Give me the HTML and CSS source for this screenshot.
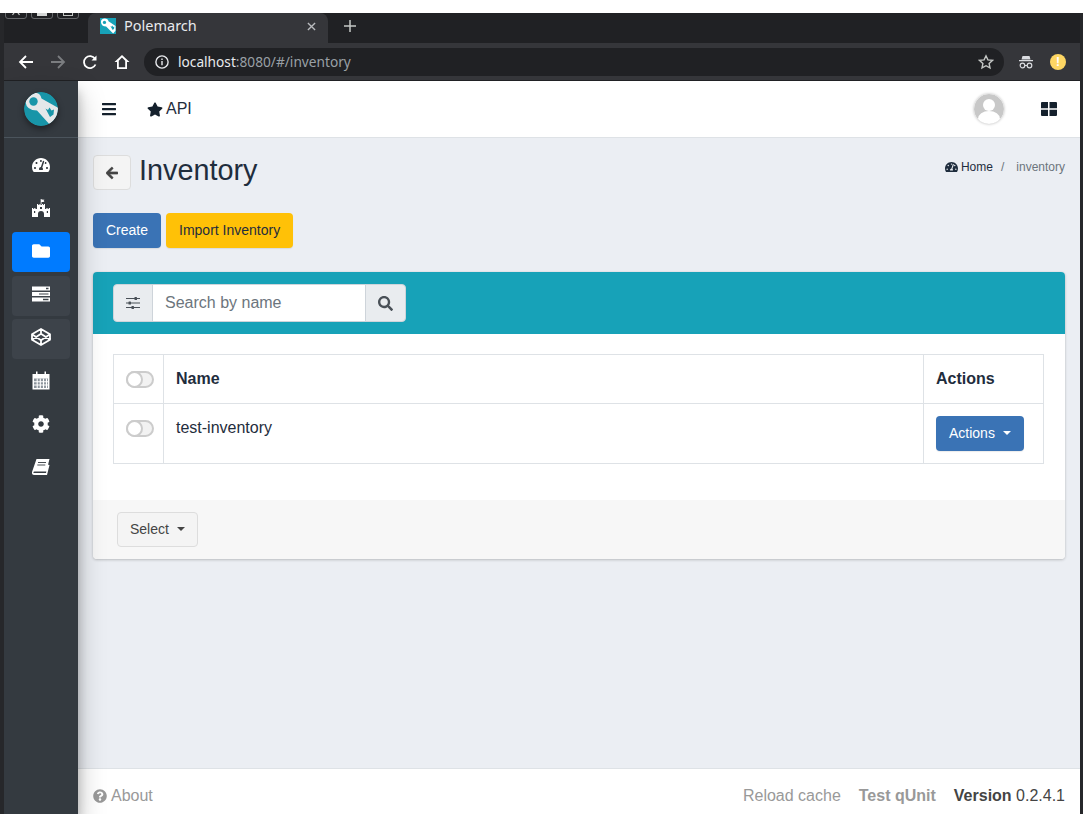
FILE: index.html
```html
<!DOCTYPE html>
<html lang="en">
<head>
    <meta charset="UTF-8">
    <meta name="viewport" content="width=device-width, initial-scale=1.0">
    <title>Polemarch</title>
    <link rel="stylesheet" href="styles.css">
</head>
<body>
    <div class="window">
        <div class="tab-strip">
            <span class="win-btn"><svg class="win-glyph" viewBox="0 0 10 6"><path d="M5 0L1.500 5M5 0l3.500 5" stroke="#c4c7c5" stroke-width="1.200" fill="none"/></svg></span>
            <span class="win-btn"><i class="win-min"></i></span>
            <span class="win-btn"><i class="win-box"></i></span>
            <div class="tab">
                <svg class="favicon" viewBox="0 0 34 34"><rect width="34" height="34" fill="#17a2b8"/><path d="M2 9Q2 1 10 1Q17 1 18 7L33 17V27L28 33L13 18Q3 18 2 9Z" fill="#fff"/><circle cx="9.500" cy="9.500" r="3.500" fill="#17a2b8"/><path d="M22 17l2.500 1.500 1.500-2.500 2 3 2.500-1-.5 5-3 2.500z" fill="#17a2b8"/></svg>
                <span class="tab-title">Polemarch</span>
                <svg class="tab-close" viewBox="0 0 10 10"><path d="M1 1l8 8M9 1l-8 8" stroke="#b9bbbe" stroke-width="1.500"/></svg>
            </div>
            <svg class="new-tab" viewBox="0 0 12 12"><path d="M6 0v12M0 6h12" stroke="#c4c7c5" stroke-width="1.500"/></svg>
        </div>
        <div class="toolbar">
            <svg class="tb-icon" viewBox="0 0 16 16"><path d="M15 8H2M8 2L2 8l6 6" fill="none" stroke="#fff" stroke-width="1.800"/></svg>
            <svg class="tb-icon" viewBox="0 0 16 16"><path d="M1 8h13M8 2l6 6-6 6" fill="none" stroke="#7b7d80" stroke-width="1.800"/></svg>
            <svg class="tb-icon" viewBox="0 0 16 16"><path d="M13.500 10.500A6 6 0 1 1 13 4.800" fill="none" stroke="#fff" stroke-width="1.800"/><path d="M14.500 1.500v5h-5z" fill="#fff"/></svg>
            <svg class="tb-icon" viewBox="0 0 16 16"><path d="M8 1L0.500 8H3v7h10V8h2.500zM4.800 13.300V6.800L8 3.600l3.200 3.200v6.500z" fill="#fff" fill-rule="evenodd"/></svg>
            <div class="omnibox">
                <svg class="info-icon" viewBox="0 0 14 14"><circle cx="7" cy="7" r="6.100" fill="none" stroke="#e8eaed" stroke-width="1.400"/><path d="M6.300 6h1.400v4.300H6.300zM6.300 3.500h1.400v1.400H6.300z" fill="#e8eaed"/></svg>
                <span class="url"><span class="url-host">localhost</span>:8080/#/inventory</span>
                <svg class="bookmark" viewBox="0 0 16 16"><path d="M8 1.800l1.900 4.100 4.500.5-3.300 3 .9 4.500L8 11.700l-4 2.200.9-4.500-3.300-3 4.500-.5z" fill="none" stroke="#c4c7c5" stroke-width="1.400"/></svg>
            </div>
            <svg class="incognito" viewBox="0 0 16 14"><path d="M4.500 1h7l1 3.500h-9zM1 5h14v1.200H1z" fill="#dadce0"/><circle cx="4.500" cy="10.500" r="2.300" fill="none" stroke="#dadce0" stroke-width="1.200"/><circle cx="11.500" cy="10.500" r="2.300" fill="none" stroke="#dadce0" stroke-width="1.200"/><path d="M6.800 10.500h2.400" stroke="#dadce0"/></svg>
            <span class="update-badge">!</span>
        </div>
        <div class="app">
            <aside class="sidebar">
                <div class="brand">
                    <svg class="brand-logo" viewBox="0 0 34 34"><clipPath id="logo-clip"><circle cx="17" cy="17" r="17"/></clipPath><circle cx="17" cy="17" r="17" fill="#1895a8"/><g clip-path="url(#logo-clip)"><path d="M1.500 10Q1.500 .5 10 .5Q16.500 .5 17.500 6.500L36 17V31L27 34L13 18.500Q2.500 18.500 1.500 10Z" fill="#e4e7e9"/><circle cx="9.500" cy="9.500" r="4.200" fill="#1895a8"/><path d="M21.500 16.500l2.500 1.500 1.500-2.500 2 3 2.500-1-.5 5-3.500 2.500z" fill="#1895a8"/></g></svg>
                </div>
                <nav class="side-nav">
                    <a class="side-item">
                        <svg class="side-icon" viewBox="0 0 576 512"><path d="M288 32C128.940 32 0 160.940 0 320c0 52.800 14.250 102.260 39.060 144.800 5.610 9.620 16.300 15.200 27.440 15.200h443c11.140 0 21.830-5.580 27.440-15.200C561.750 422.260 576 372.800 576 320c0-159.060-128.940-288-288-288zm0 64c14.710 0 26.580 10.130 30.320 23.650-1.110 2.260-2.640 4.230-3.450 6.670l-9.220 27.670c-5.130 3.490-10.970 6.010-17.640 6.010-17.670 0-32-14.330-32-32S270.330 96 288 96zM96 384c-17.670 0-32-14.330-32-32s14.330-32 32-32 32 14.330 32 32-14.330 32-32 32zm48-160c-17.670 0-32-14.330-32-32s14.330-32 32-32 32 14.330 32 32-14.330 32-32 32zm246.770-72.410l-61.330 184C343.130 347.330 352 364.540 352 384c0 11.720-3.380 22.550-8.880 32H232.880c-5.500-9.450-8.880-20.280-8.880-32 0-33.940 26.500-61.430 59.900-63.590l61.340-184.010c4.170-12.560 17.730-19.450 30.360-15.170 12.570 4.190 19.350 17.790 15.170 30.360zm14.660 57.200l15.520-46.550c3.470-1.290 7.130-2.230 11.050-2.230 17.670 0 32 14.330 32 32s-14.330 32-32 32c-11.380-.010-20.890-6.280-26.570-15.220zM480 384c-17.670 0-32-14.330-32-32s14.330-32 32-32 32 14.330 32 32-14.330 32-32 32z" fill="#fff"/></svg>
                    </a>
                    <a class="side-item">
                        <svg class="side-icon" viewBox="0 0 18 18"><path d="M8.700 0h.8v.6l3 .2-1 1.100 1 1.100h-3V5h-.8z" fill="#fff"/><path d="M0 9h1.200v1h1V9h1.200v1H5V5h1.200v1h1.200V5h1.200v1h1.200V5h1.200v1h.8V5H13v5h1.400V9h1.200v1h1.200V9H18v9h-6v-3a3 3 0 0 0-6 0v3H0z" fill="#fff"/><path d="M8 8h2v2H8zM2 12h1.200v2H2zM14.800 12H16v2h-1.200z" fill="#343a40"/></svg>
                    </a>
                    <a class="side-item active">
                        <svg class="side-icon" viewBox="0 0 512 512"><path d="M464 128H272l-64-64H48C21.490 64 0 85.490 0 112v288c0 26.510 21.490 48 48 48h416c26.510 0 48-21.490 48-48V176c0-26.510-21.490-48-48-48z" fill="#fff"/></svg>
                    </a>
                    <a class="side-item muted">
                        <svg class="side-icon" viewBox="0 0 18 16"><path d="M0 .500h18v4H0zM0 6h18v4H0zM0 11.500h18v4H0z" fill="#fff"/><path d="M14 1.800h2.500v1.400H14zM7 7.400h9.500v1H7zM11 12.800h5.500v1.400H11z" fill="#3d434a"/></svg>
                    </a>
                    <a class="side-item muted">
                        <svg class="side-icon side-icon-wide" viewBox="0 0 20 18"><path d="M10 1l9 5.200v5.600L10 17l-9-5.200V6.200zM10 1v4.800M10 12.200V17M1 6.200l9 6 9-6M1 11.800l9-6 9 6" fill="none" stroke="#fff" stroke-width="1.800" stroke-linejoin="round"/></svg>
                    </a>
                    <a class="side-item">
                        <svg class="side-icon side-icon-tall" viewBox="0 0 18 19"><path d="M.500 3h17v15.500H.500z" fill="#fff"/><path d="M2 7.500h14v9.500H2z" fill="#8b939b"/><path d="M5.200 7.500v9.500M8.300 7.500v9.500M11.500 7.500v9.500M14.500 7.500v9.500M2 10.700h14M2 14h14" stroke="#fff" stroke-width="1.100"/><path d="M4 .500h1.500v4H4zM12.500 .500H14v4h-1.500z" fill="#fff"/></svg>
                    </a>
                    <a class="side-item">
                        <svg class="side-icon" viewBox="0 0 512 512"><path d="M487.400 315.700l-42.600-24.600c4.300-23.200 4.300-47 0-70.200l42.600-24.600c4.900-2.800 7.100-8.600 5.500-14-11.100-35.600-30-67.800-54.700-94.600-3.800-4.100-10-5.100-14.800-2.300L380.800 110c-17.900-15.400-38.500-27.300-60.800-35.100V25.800c0-5.600-3.900-10.500-9.400-11.700-36.700-8.200-74.300-7.800-109.200 0-5.500 1.200-9.400 6.100-9.400 11.700V75c-22.200 7.900-42.800 19.800-60.800 35.100L88.700 85.500c-4.900-2.800-11-1.900-14.800 2.300-24.700 26.700-43.600 58.900-54.700 94.600-1.700 5.400.6 11.200 5.500 14L67.300 221c-4.300 23.200-4.300 47 0 70.200l-42.600 24.600c-4.900 2.800-7.100 8.600-5.500 14 11.100 35.600 30 67.800 54.700 94.600 3.800 4.100 10 5.100 14.800 2.300l42.600-24.600c17.900 15.400 38.500 27.300 60.800 35.100v49.200c0 5.600 3.900 10.500 9.400 11.700 36.700 8.200 74.300 7.800 109.200 0 5.500-1.200 9.400-6.100 9.400-11.700v-49.200c22.200-7.900 42.800-19.800 60.800-35.100l42.600 24.600c4.900 2.800 11 1.900 14.800-2.300 24.700-26.700 43.600-58.900 54.700-94.600 1.500-5.500-.7-11.300-5.600-14.100zM256 336c-44.100 0-80-35.900-80-80s35.900-80 80-80 80 35.900 80 80-35.900 80-80 80z" fill="#fff"/></svg>
                    </a>
                    <a class="side-item">
                        <svg class="side-icon" viewBox="0 0 18 16"><path d="M4.500 0H17.500L14.300 12.500H2.500Q1.200 12.500 1.500 14H14l1.800-8.500 1.700.5L15 16H2.500Q-.5 16 0 13z" fill="#fff"/><path d="M6 3.500h8M5.300 6h8" stroke="#343a40" stroke-width=".9"/></svg>
                    </a>
                </nav>
            </aside>
            <div class="main">
                <header class="navbar">
                    <svg class="nav-bars" viewBox="0 0 448 512"><path d="M16 132h416c8.837 0 16-7.163 16-16V76c0-8.837-7.163-16-16-16H16C7.163 60 0 67.163 0 76v40c0 8.837 7.163 16 16 16zm0 160h416c8.837 0 16-7.163 16-16v-40c0-8.837-7.163-16-16-16H16c-8.837 0-16 7.163-16 16v40c0 8.837 7.163 16 16 16zm0 160h416c8.837 0 16-7.163 16-16v-40c0-8.837-7.163-16-16-16H16c-8.837 0-16 7.163-16 16v40c0 8.837 7.163 16 16 16z" fill="#14202c"/></svg>
                    <a class="nav-api">
                        <svg class="nav-star" viewBox="0 0 576 512"><path d="M259.300 17.800L194 150.200 47.900 171.500c-26.200 3.800-36.700 36.100-17.700 54.600l105.700 103-25 145.500c-4.500 26.300 23.200 46 46.400 33.700L288 439.600l130.700 68.700c23.200 12.200 50.900-7.400 46.400-33.700l-25-145.500 105.700-103c19-18.500 8.500-50.800-17.700-54.600L382 150.200 316.700 17.800c-11.700-23.600-45.600-23.900-57.400 0z" fill="#14202c"/></svg>
                        API
                    </a>
                    <svg class="avatar" viewBox="0 0 30 30"><clipPath id="avatar-clip"><circle cx="15" cy="15" r="15"/></clipPath><circle cx="15" cy="15" r="15" fill="#c8c8c8"/><g clip-path="url(#avatar-clip)" fill="#fff"><circle cx="15" cy="11" r="6"/><ellipse cx="15" cy="25" rx="11" ry="8"/></g></svg>
                    <svg class="nav-grid" viewBox="0 0 16 14"><path d="M0 1a1 1 0 0 1 1-1h6v6.300H0zM8.500 0H15a1 1 0 0 1 1 1v5.300H8.500zM0 7.700h7V14H1a1 1 0 0 1-1-1zM8.500 7.700H16V13a1 1 0 0 1-1 1H8.500z" fill="#14202c"/></svg>
                </header>
                <main class="content">
                    <div class="page-head">
                        <button class="back-btn">
                            <svg class="back-icon" viewBox="0 0 448 512"><path d="M257.500 445.100l-22.200 22.200c-9.400 9.400-24.600 9.400-33.900 0L7 273c-9.400-9.400-9.400-24.600 0-33.900L201.400 44.700c9.400-9.400 24.600-9.400 33.900 0l22.200 22.200c9.500 9.500 9.300 25-.4 34.300L136.600 216H424c13.300 0 24 10.700 24 24v32c0 13.300-10.700 24-24 24H136.600l120.500 114.800c9.800 9.300 10 24.800.4 34.300z" fill="#444" stroke="#444" stroke-width="24"/></svg>
                        </button>
                        <h1 class="page-title">Inventory</h1>
                        <ol class="crumbs">
                            <li class="crumb-home">
                                <svg class="crumb-icon" viewBox="0 0 576 512"><path d="M288 32C128.940 32 0 160.940 0 320c0 52.800 14.250 102.260 39.060 144.800 5.610 9.620 16.300 15.200 27.440 15.200h443c11.140 0 21.830-5.580 27.440-15.200C561.750 422.260 576 372.800 576 320c0-159.060-128.940-288-288-288zM96 384a32 32 0 1 1 0-64 32 32 0 0 1 0 64zm48-160a32 32 0 1 1 0-64 32 32 0 0 1 0 64zm144-64a32 32 0 1 1 0-64 32 32 0 0 1 0 64zm56 256H232c-5-9-8-20-8-32 0-34 26-61 60-64l61-184c4-12 18-19 30-15s19 18 15 30l-61 184c14 11 23 28 23 49 0 12-3 23-8 32zm136-32a32 32 0 1 1 0-64 32 32 0 0 1 0 64zm-48-160a32 32 0 1 1 0-64 32 32 0 0 1 0 64z" fill="#1f2d3d"/></svg>
                                Home
                            </li>
                            <li class="crumb-sep">/</li>
                            <li class="crumb-current">inventory</li>
                        </ol>
                    </div>
                    <div class="page-actions">
                        <button class="btn btn-blue">Create</button>
                        <button class="btn btn-yellow">Import Inventory</button>
                    </div>
                    <section class="card">
                        <div class="card-header">
                            <div class="search-group">
                                <span class="addon addon-left">
                                    <svg class="addon-icon" viewBox="0 0 14 14"><path d="M0 2.500h14M0 7h14M0 11.500h14" stroke="#495057" stroke-width="1.100"/><rect x="8.500" y="1" width="2.500" height="3" rx=".6" fill="#495057"/><rect x="2.500" y="5.500" width="2.500" height="3" rx=".6" fill="#495057"/><rect x="5.500" y="10" width="2.500" height="3" rx=".6" fill="#495057"/></svg>
                                </span>
                                <input class="search-input" type="text" placeholder="Search by name">
                                <span class="addon addon-right">
                                    <svg class="addon-search" viewBox="0 0 512 512"><path d="M505 442.700L405.300 343c-4.500-4.500-10.600-7-17-7H372c27.600-35.300 44-79.700 44-128C416 93.100 322.900 0 208 0S0 93.100 0 208s93.100 208 208 208c48.300 0 92.700-16.400 128-44v16.300c0 6.400 2.500 12.500 7 17l99.700 99.700c9.400 9.400 24.600 9.400 33.900 0l28.300-28.300c9.400-9.400 9.400-24.600.1-34zM208 336c-70.700 0-128-57.200-128-128 0-70.700 57.200-128 128-128 70.700 0 128 57.200 128 128 0 70.700-57.200 128-128 128z" fill="#495057"/></svg>
                                </span>
                            </div>
                        </div>
                        <div class="card-body">
                            <table class="list-table">
                                <thead>
                                    <tr>
                                        <th class="col-toggle"><span class="toggle"></span></th>
                                        <th>Name</th>
                                        <th class="col-actions">Actions</th>
                                    </tr>
                                </thead>
                                <tbody>
                                    <tr>
                                        <td class="col-toggle"><span class="toggle"></span></td>
                                        <td>test-inventory</td>
                                        <td class="col-actions"><button class="btn btn-blue btn-caret">Actions</button></td>
                                    </tr>
                                </tbody>
                            </table>
                        </div>
                        <div class="card-footer">
                            <button class="btn btn-light btn-caret">Select</button>
                        </div>
                    </section>
                </main>
                <footer class="page-footer">
                    <a class="foot-about">
                        <svg class="foot-icon" viewBox="0 0 512 512"><path d="M504 256c0 136.997-111.043 248-248 248S8 392.997 8 256C8 119.083 119.043 8 256 8s248 111.083 248 248zM262.655 90c-54.497 0-89.255 22.957-116.549 63.758-3.536 5.286-2.353 12.415 2.715 16.258l34.699 26.310c5.205 3.947 12.621 3.008 16.665-2.122 17.864-22.658 30.113-35.797 57.303-35.797 20.429 0 45.698 13.148 45.698 32.958 0 14.976-12.363 22.667-32.534 33.976C247.128 238.528 216 254.941 216 296v4c0 6.627 5.373 12 12 12h56c6.627 0 12-5.373 12-12v-1.333c0-28.462 83.186-29.647 83.186-106.667 0-58.002-60.165-102-116.531-102zM256 338c-25.365 0-46 20.635-46 46 0 25.364 20.635 46 46 46s46-20.636 46-46c0-25.365-20.635-46-46-46z" fill="#999"/></svg>
                        About
                    </a>
                    <a class="foot-link">Reload cache</a>
                    <a class="foot-link foot-bold">Test qUnit</a>
                    <span class="foot-version"><b>Version</b> 0.2.4.1</span>
                </footer>
            </div>
        </div>
    </div>
</body>
</html>
```
FILE: styles.css
```css
* {
    box-sizing: border-box;
}

html, body {
    margin: 0;
    padding: 0;
    background: #fff;
}

body {
    height: 827px;
    overflow: hidden;
    font-family: "Liberation Sans", Arial, sans-serif;
    font-size: 16px;
    color: #1f2d3d;
}

.window {
    display: flex;
    flex-direction: column;
    height: 801px;
    margin: 13px 1px 0 0;
    border-left: 4px solid #26272a;
    border-right: 3px solid #26272a;
    overflow: hidden;
}

/* browser chrome */
.tab-strip {
    display: flex;
    flex: none;
    align-items: flex-start;
    height: 30px;
    padding-left: 1px;
    background: #202124;
    overflow: hidden;
}

.win-btn {
    display: flex;
    justify-content: center;
    align-items: flex-end;
    flex: none;
    width: 22px;
    height: 20px;
    margin: -14px 4px 0 0;
    padding-bottom: 2px;
    border: 1px solid #66686b;
    border-radius: 0 0 3px 3px;
}

.win-glyph {
    width: 10px;
    height: 6px;
}

.win-min {
    width: 10px;
    height: 3px;
    background: #d5d7d6;
}

.win-box {
    width: 10px;
    height: 4px;
    border: 1px solid #c4c7c5;
    border-top: 0;
}

.tab {
    display: flex;
    flex: none;
    align-items: center;
    width: 240px;
    height: 30px;
    margin-left: 5px;
    padding: 0 0 4px 12px;
    background: #35363a;
    border-radius: 8px 8px 0 0;
}

.favicon {
    width: 16px;
    height: 16px;
    margin-right: 8px;
}

.tab-title {
    flex: 1;
    margin-top: -2px;
    font-family: "Noto Sans", sans-serif;
    font-size: 14.500px;
    color: #e8eaed;
}

.tab-close {
    width: 9px;
    height: 9px;
    margin-right: 12px;
}

.new-tab {
    width: 12px;
    height: 12px;
    margin: 7px 0 0 16px;
}

.toolbar {
    display: flex;
    flex: none;
    align-items: center;
    height: 38px;
    padding-left: 14px;
    background: #35363a;
    border-bottom: 1px solid #202124;
}

.tb-icon {
    width: 16px;
    height: 16px;
    margin-right: 16px;
}

.omnibox {
    display: flex;
    align-items: center;
    width: 860px;
    height: 28px;
    margin-left: -2px;
    padding: 0 10px 0 11px;
    background: #202124;
    border-radius: 14px;
}

.info-icon {
    width: 14px;
    height: 14px;
    margin-right: 9px;
}

.url {
    flex: 1;
    font-family: "Noto Sans", sans-serif;
    font-size: 13.700px;
    color: #9aa0a6;
}

.url-host {
    color: #e8eaed;
}

.bookmark {
    width: 16px;
    height: 16px;
}

.incognito {
    width: 16px;
    height: 14px;
    margin-left: 14px;
}

.update-badge {
    width: 16px;
    height: 16px;
    margin-left: 16px;
    border-radius: 50%;
    background: #fdd663;
    font-size: 12px;
    font-weight: bold;
    line-height: 16px;
    text-align: center;
    color: #fff;
}

/* app shell */
.app {
    display: flex;
    flex: 1;
    min-height: 0;
}

.sidebar {
    position: relative;
    z-index: 2;
    flex: none;
    width: 74px;
    background: #343a40;
    box-shadow: 0 14px 28px rgba(0, 0, 0, 0.25), 0 10px 10px rgba(0, 0, 0, 0.22);
}

.brand {
    display: flex;
    justify-content: center;
    align-items: center;
    height: 57px;
    border-bottom: 1px solid #4b545c;
}

.brand-logo {
    width: 34px;
    height: 34px;
    border-radius: 50%;
    box-shadow: 0 3px 6px rgba(0, 0, 0, 0.4);
}

.side-nav {
    display: flex;
    flex-direction: column;
    gap: 3.200px;
    padding: 8px 8px 0;
}

.side-item {
    display: flex;
    justify-content: center;
    align-items: flex-start;
    height: 40px;
    padding-top: 9.500px;
    border-radius: 4px;
}

.side-item.active {
    background: #007bff;
}

.side-item.muted {
    background: #3d434a;
}

.side-icon {
    width: 18px;
    height: 18px;
}

.side-icon-wide {
    width: 20px;
}

.side-icon-tall {
    height: 19px;
}

.main {
    display: flex;
    flex: 1;
    flex-direction: column;
    min-width: 0;
}

.navbar {
    display: flex;
    flex: none;
    align-items: center;
    height: 57px;
    padding: 0 23px 0 24px;
    background: #fff;
    border-bottom: 1px solid #dee2e6;
}

.nav-bars {
    width: 14px;
    height: 16px;
}

.nav-api {
    display: flex;
    flex: 1;
    align-items: center;
    gap: 3px;
    margin-left: 31px;
    color: #1f2d3d;
}

.nav-star {
    width: 16px;
    height: 15px;
}

.avatar {
    width: 30px;
    height: 30px;
    margin-right: 37px;
    border-radius: 50%;
    box-shadow: 0 0 3px rgba(0, 0, 0, 0.3);
}

.nav-grid {
    width: 16px;
    height: 14px;
}

/* page */
.content {
    flex: 1;
    padding: 17px 15px 0;
    background: #ebeef3;
}

.page-head {
    display: flex;
    align-items: flex-start;
    height: 58px;
}

.back-btn {
    display: flex;
    justify-content: center;
    align-items: center;
    width: 38px;
    height: 35px;
    padding: 0;
    background: #f4f4f4;
    border: 1px solid #ddd;
    border-radius: 4px;
}

.back-icon {
    width: 12px;
    height: 14px;
}

.page-title {
    flex: 1;
    margin: -2px 0 0 8px;
    font-size: 28.800px;
    font-weight: 400;
    line-height: 34px;
    color: #1f2d3d;
}

.crumbs {
    display: flex;
    gap: 8px;
    margin: 5px 0 0;
    padding: 0;
    list-style: none;
    font-size: 12px;
    line-height: 14px;
}

.crumb-home {
    display: flex;
    align-items: center;
    gap: 3px;
    color: #1f2d3d;
}

.crumb-icon {
    width: 13px;
    height: 12px;
}

.crumb-sep,
.crumb-current {
    color: #6c757d;
}

.crumb-current {
    margin-left: 4px;
}

.page-actions {
    display: flex;
    gap: 5px;
    margin-bottom: 24px;
}

.btn {
    height: 35px;
    padding: 0 12px;
    border: 1px solid transparent;
    border-radius: 4px;
    font-family: "Liberation Sans", Arial, sans-serif;
    font-size: 14px;
    line-height: 21px;
    box-shadow: 0 1px 1px rgba(0, 0, 0, 0.08);
}

.btn-blue {
    background: #3a73b5;
    color: #fff;
}

.btn-yellow {
    background: #ffc107;
    color: #1f2d3d;
}

.btn-light {
    background: #f4f4f4;
    border-color: #ddd;
    color: #444;
    box-shadow: none;
}

.btn-caret::after {
    content: "";
    display: inline-block;
    margin-left: 8px;
    vertical-align: 3px;
    border-top: 4.500px solid;
    border-right: 4.500px solid transparent;
    border-left: 4.500px solid transparent;
}

.card {
    background: #fff;
    border-radius: 4px;
    box-shadow: 0 0 1px rgba(0, 0, 0, 0.125), 0 1px 3px rgba(0, 0, 0, 0.2);
}

.card-header {
    padding: 12px 20px;
    background: #17a2b8;
    border-radius: 4px 4px 0 0;
}

.search-group {
    display: flex;
    width: 293px;
    height: 38px;
}

.addon {
    display: flex;
    flex: none;
    justify-content: center;
    align-items: center;
    background: #e9ecef;
    border: 1px solid #ced4da;
}

.addon-left {
    width: 40px;
    border-radius: 4px 0 0 4px;
}

.addon-right {
    width: 41px;
    margin-left: -1px;
    border-radius: 0 4px 4px 0;
}

.addon-icon {
    width: 14px;
    height: 14px;
}

.addon-search {
    width: 15px;
    height: 15px;
}

.search-input {
    flex: 1;
    min-width: 0;
    margin-left: -1px;
    padding: 0 12px;
    background: #fff;
    border: 1px solid #ced4da;
    font-family: "Liberation Sans", Arial, sans-serif;
    font-size: 16px;
    color: #495057;
}

.search-input::placeholder {
    color: #6c757d;
    opacity: 1;
}

.card-body {
    padding: 20px 21px 36px 20px;
}

.list-table {
    width: 100%;
    table-layout: fixed;
    border-collapse: collapse;
    font-size: 16px;
    line-height: 24px;
}

.list-table th,
.list-table td {
    padding: 12px;
    border: 1px solid #dee2e6;
    text-align: left;
    vertical-align: top;
}

.list-table .col-toggle {
    width: 50px;
}

.list-table .col-actions {
    width: 120px;
}

.toggle {
    position: relative;
    display: block;
    width: 28px;
    height: 17px;
    margin-top: 4px;
    background: #f2f2f2;
    border: 2px solid #ccc;
    border-radius: 9px;
}

.toggle::after {
    content: "";
    position: absolute;
    top: -2px;
    left: -2px;
    width: 17px;
    height: 17px;
    box-sizing: border-box;
    background: #fff;
    border: 2px solid #ccc;
    border-radius: 50%;
}

.card-footer {
    padding: 12px 24px;
    background: #f7f7f7;
    border-radius: 0 0 4px 4px;
}

/* footer */
.page-footer {
    display: flex;
    flex: none;
    gap: 18px;
    height: 46px;
    padding: 15px 15px 0;
    background: #fff;
    border-top: 1px solid #dee2e6;
    font-size: 16px;
    line-height: 24px;
}

.foot-about {
    display: flex;
    flex: 1;
    align-items: center;
    gap: 4px;
    height: 24px;
    color: #999;
}

.foot-icon {
    width: 14px;
    height: 14px;
}

.foot-link {
    color: #999;
}

.foot-bold {
    font-weight: bold;
}

.foot-version {
    color: #444;
}
```
